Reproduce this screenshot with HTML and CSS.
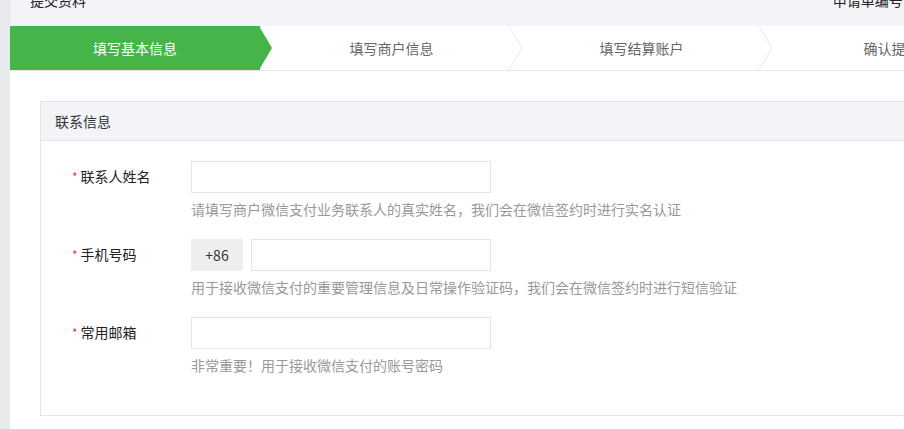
FILE: index.html
```html
<!DOCTYPE html>
<html lang="zh-CN">
<head>
    <meta charset="UTF-8">
    <meta name="viewport" content="width=device-width, initial-scale=1.0">
    <title>提交资料</title>
    <link rel="stylesheet" href="styles.css">
</head>
<body>
    <div class="layout">
        <aside class="side"></aside>
        <div class="content">
            <div class="topbar">
                <span class="page-title">提交资料</span>
                <span class="apply-no">申请单编号：200000215896623100871</span>
            </div>

            <div class="steps">
                <div class="step active">
                    <span>填写基本信息</span>
                    <svg class="arrow" width="14" height="44" viewBox="0 0 14 44"><polygon points="0,0 13,22 0,44" fill="#45b549"/></svg>
                </div>
                <div class="step">
                    <span>填写商户信息</span>
                    <svg class="arrow" width="14" height="44" viewBox="0 0 14 44"><polyline points="0,0 13,22 0,44" fill="none" stroke="#e7e7e7" stroke-width="1"/></svg>
                </div>
                <div class="step">
                    <span>填写结算账户</span>
                    <svg class="arrow" width="14" height="44" viewBox="0 0 14 44"><polyline points="0,0 13,22 0,44" fill="none" stroke="#e7e7e7" stroke-width="1"/></svg>
                </div>
                <div class="step">
                    <span>确认提交</span>
                </div>
            </div>

            <div class="panel">
                <div class="panel-hd">联系信息</div>
                <div class="panel-bd">
                    <div class="form-row">
                        <label class="form-label"><i>*</i>联系人姓名</label>
                        <div class="form-field">
                            <input type="text" class="text-input">
                            <p class="tips">请填写商户微信支付业务联系人的真实姓名，我们会在微信签约时进行实名认证</p>
                        </div>
                    </div>
                    <div class="form-row">
                        <label class="form-label"><i>*</i>手机号码</label>
                        <div class="form-field">
                            <div class="phone">
                                <span class="prefix">+86</span>
                                <input type="text" class="text-input short">
                            </div>
                            <p class="tips">用于接收微信支付的重要管理信息及日常操作验证码，我们会在微信签约时进行短信验证</p>
                        </div>
                    </div>
                    <div class="form-row">
                        <label class="form-label"><i>*</i>常用邮箱</label>
                        <div class="form-field">
                            <input type="text" class="text-input">
                            <p class="tips">非常重要！用于接收微信支付的账号密码</p>
                        </div>
                    </div>
                </div>
            </div>
        </div>
    </div>
</body>
</html>
```

FILE: styles.css
```css
* {
    padding: 0;
    margin: 0;
    box-sizing: border-box;
}
body {
    font-family: "Noto Sans CJK SC", "Microsoft YaHei", sans-serif;
    font-size: 14px;
    color: #333;
    background: #fff;
    overflow: hidden;
}
.layout {
    display: flex;
    width: 1100px;
    min-height: 429px;
}
.side {
    width: 10px;
    background: #e8e9ec;
}
.content {
    flex: 1;
}

/* 頂部 */
.topbar {
    height: 26px;
    background: #f3f4f7;
    display: flex;
    justify-content: space-between;
    padding: 0 20px;
    overflow: hidden;
    white-space: nowrap;
}
.topbar span {
    line-height: 20px;
    margin-top: -10px;
    color: #222;
}

/* 步驟條 */
.steps {
    display: flex;
    height: 45px;
    border-bottom: 1px solid #e6e6e6;
}
.step {
    position: relative;
    width: 250px;
    height: 44px;
    line-height: 44px;
    text-align: center;
    color: #666;
    padding-left: 13px;
}
.step.active {
    background: #45b549;
    color: #fff;
    padding-left: 0;
}
.step .arrow {
    position: absolute;
    top: 0;
    right: -13px;
    z-index: 1;
}

/* 面板 */
.panel {
    margin: 30px 0 0 30px;
    border: 1px solid #e4e4e4;
    width: 1040px;
}
.panel-hd {
    height: 39px;
    line-height: 38px;
    padding-left: 14px;
    background: #f3f4f7;
    border-bottom: 1px solid #e4e4e4;
    color: #333;
}
.panel-bd {
    padding: 20px 0 20px;
}
.form-row {
    display: flex;
    margin-bottom: 20px;
}
.form-label {
    width: 150px;
    padding-left: 31px;
    line-height: 30px;
    color: #222;
}
.form-label i {
    font-style: normal;
    color: #e64340;
    margin-right: 3px;
    font-size: 12px;
}
.text-input {
    display: block;
    width: 300px;
    height: 32px;
    border: 1px solid #e4e4e4;
    outline: none;
}
.text-input.short {
    width: 240px;
}
.phone {
    display: flex;
    gap: 8px;
}
.prefix {
    width: 52px;
    height: 32px;
    line-height: 32px;
    text-align: center;
    background: #eee;
    color: #333;
}
.tips {
    margin-top: 6px;
    line-height: 20px;
    color: #999;
}
```
